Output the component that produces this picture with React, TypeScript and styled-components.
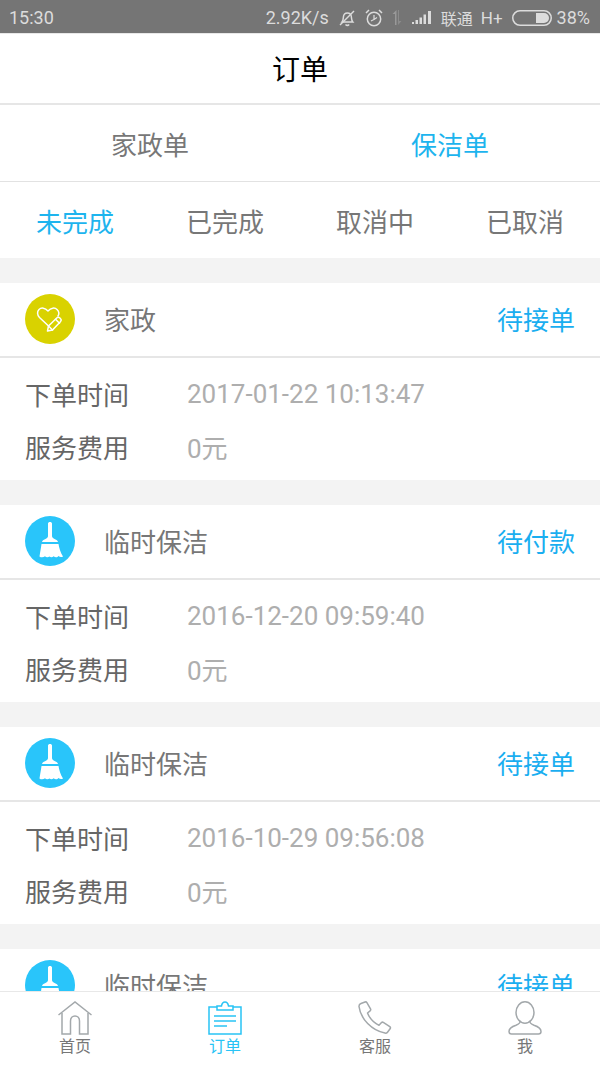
import React from 'react';
import styled, { createGlobalStyle } from 'styled-components';

const GlobalStyle = createGlobalStyle`
  html, body {
    margin: 0;
    padding: 0;
    background: #fff;
  }
  * {
    box-sizing: border-box;
  }
  body {
    font-family: "Roboto", "Noto Sans CJK SC", sans-serif;
  }
`;

const BLUE = '#1db4ee';

const Page = styled.div`
  width: 600px;
  height: 1067px;
  display: flex;
  flex-direction: column;
  overflow: hidden;
  background: #fff;
`;

const StatusBar = styled.div`
  height: 33px;
  flex: none;
  background: #757575;
  color: #dcdcdc;
  display: flex;
  align-items: center;
  justify-content: space-between;
  padding: 2px 10px 0 9px;
  font-size: 18px;
`;

const StatusRight = styled.div`
  display: flex;
  align-items: center;
`;

const StatusText = styled.span<{ $ml?: number; $size?: number }>`
  margin-left: ${(p) => p.$ml ?? 0}px;
  font-size: ${(p) => p.$size ?? 18}px;
  white-space: nowrap;
`;

const StatusIcon = styled.svg<{ $ml: number }>`
  margin-left: ${(p) => p.$ml}px;
  display: block;
  flex: none;
`;

const TitleBar = styled.div`
  height: 72px;
  flex: none;
  border-top: 1px solid #e8e8e8;
  border-bottom: 2px solid #e6e6e6;
  display: flex;
  align-items: center;
  justify-content: center;
  font-size: 28px;
  color: #000;
  padding-bottom: 2px;
`;

const TabRow = styled.div<{ $h: number; $line?: boolean }>`
  height: ${(p) => p.$h}px;
  flex: none;
  display: flex;
  border-bottom: ${(p) => (p.$line ? '1px solid #e2e2e2' : 'none')};
`;

const Tab = styled.div<{ $active?: boolean }>`
  flex: 1;
  display: flex;
  align-items: center;
  justify-content: center;
  font-size: 26px;
  color: ${(p) => (p.$active ? BLUE : '#777')};
`;

const List = styled.div`
  flex: 1;
  min-height: 0;
  overflow: hidden;
  background: #f3f3f3;
  padding-top: 25px;
  display: flex;
  flex-direction: column;
  gap: 25px;
`;

const Card = styled.div`
  flex: none;
  background: #fff;
`;

const CardHead = styled.div`
  height: 75px;
  border-bottom: 2px solid #e6e6e6;
  display: flex;
  align-items: center;
  padding: 0 25px 2px;
`;

const Badge = styled.div<{ $bg: string }>`
  width: 50px;
  height: 50px;
  border-radius: 50%;
  background: ${(p) => p.$bg};
  flex: none;
  display: flex;
  align-items: center;
  justify-content: center;
`;

const CardName = styled.div`
  margin-left: 29px;
  font-size: 26px;
  color: #777;
  flex: 1;
`;

const CardState = styled.div`
  font-size: 26px;
  color: #1aaef0;
`;

const CardBody = styled.div`
  height: 122px;
  padding: 9px 25px 0;
`;

const InfoRow = styled.div`
  height: 53px;
  display: flex;
  align-items: center;
`;

const InfoLabel = styled.div`
  width: 162px;
  font-size: 26px;
  color: #666;
`;

const InfoValue = styled.div`
  font-size: 26px;
  color: #aeaeae;
`;

const BottomNav = styled.div`
  height: 76px;
  flex: none;
  background: #fff;
  border-top: 1px solid #e8e8e8;
  display: flex;
`;

const NavItem = styled.div<{ $active?: boolean }>`
  flex: 1;
  display: flex;
  flex-direction: column;
  align-items: center;
  padding-top: 9px;
  font-size: 16px;
  line-height: 20px;
  color: ${(p) => (p.$active ? '#28c3f5' : '#777')};
  svg {
    display: block;
    margin-bottom: 2px;
  }
`;

const MuteIcon = () => (
  <StatusIcon $ml={9} width="18" height="18" viewBox="0 0 18 18" fill="none" stroke="#dcdcdc" strokeWidth="1.5">
    <path d="M4 13c1.2-1.4 1.2-3 1.4-5 .2-2.300 1.800-4 4-4s3.800 1.700 4 4c.2 2 .2 3.600 1.400 5z" />
    <path d="M7.500 15.500c1 1 2.700 1 3.700 0" />
    <path d="M2 16 16 2" />
  </StatusIcon>
);

const AlarmIcon = () => (
  <StatusIcon $ml={9} width="18" height="20" viewBox="0 0 18 20" fill="none" stroke="#dcdcdc" strokeWidth="1.5">
    <circle cx="9" cy="11" r="6.700" />
    <path d="M9 7v4.500l-3 1.500M9 11.500l3-2" strokeWidth="1.200" />
    <path d="M1 5l3-3M17 5l-3-3" />
  </StatusIcon>
);

const DataIcon = () => (
  <StatusIcon $ml={8} width="13" height="17" viewBox="0 0 13 17" fill="#a8a8a8">
    <path d="M4 16V5H1.500L5.500 1v15z" opacity="0.7" />
    <path d="M8 1v11h2.500L7 16V1z" opacity="0.45" />
  </StatusIcon>
);

const SignalIcon = () => (
  <StatusIcon $ml={8} width="20" height="15" viewBox="0 0 20 15" fill="#dcdcdc">
    <rect x="0" y="12" width="2" height="2" />
    <rect x="3.500" y="10" width="2.500" height="4" />
    <rect x="7.500" y="7.500" width="2.500" height="6.500" />
    <rect x="11.500" y="4.500" width="2.500" height="9.500" />
    <rect x="16" y="1" width="3" height="13" />
  </StatusIcon>
);

const BatteryIcon = () => (
  <StatusIcon $ml={9} width="40" height="16" viewBox="0 0 40 16">
    <rect x="0.750" y="0.750" width="38.500" height="14.500" rx="7.250" fill="none" stroke="#dcdcdc" strokeWidth="1.500" />
    <path d="M24 3h8a5 5 0 0 1 0 10h-8z" fill="#dcdcdc" />
  </StatusIcon>
);

const HeartPenIcon = () => (
  <svg width="28" height="28" viewBox="0 0 28 28" fill="none" stroke="#fff" strokeWidth="1.500" strokeLinejoin="round" strokeLinecap="round">
    <path d="M12 20.500 3.500 12.500C1 10 1 6.500 3 4.500c2.300-2.200 6-1.800 9 1.500 3-3.300 6.800-3.700 9-1.500 2 2 2.300 4.500 1 6.500" />
    <path d="M11.500 26l1-5L21 12.800c.8-.8 1.800-.8 2.600 0l1 1c.8.8.8 1.800 0 2.600L16.500 25z" />
    <path d="M12.500 21l4 4M19.500 14.300l4 4" />
  </svg>
);

const BroomIcon = () => (
  <svg width="26" height="38" viewBox="0 0 26 38" fill="#fff">
    <path d="M11 1.500c0-.8.800-1.500 2-1.500s2 .7 2 1.500V14c0 1.500 1 2.400 3 3.200 1.500.6 2.600 1.400 3 2.800H5c.4-1.400 1.500-2.200 3-2.800 2-.8 3-1.700 3-3.200z" />
    <path d="M4.500 22h17c.6 4 2 8.500 4.500 12.500-1.500 1-3.300.7-4.500-.5-1 1.500-3.500 1.700-4.800.2-1.200 1.300-3 1.500-4.200.3-1.400 1.200-3.500 1.100-4.500-.3-1.500 1.300-4 1.400-5.500.2C3 30.500 4 26 4.500 22z" />
  </svg>
);

const HomeIcon = () => (
  <svg width="34" height="34" viewBox="0 0 34 34" fill="none" stroke="#a3a8ab" strokeWidth="1.500">
    <path d="M0.500 14 17 1l16.500 13" />
    <path d="M4 12v21h8.500V20c0-3 2-5 4.500-5s4.500 2 4.500 5v13H30V12" />
  </svg>
);

const OrderIcon = () => (
  <svg width="34" height="34" viewBox="0 0 34 34" fill="none" stroke="#28c3f5" strokeWidth="1.500">
    <path d="M9 6H1v27h32V6h-8" />
    <path d="M9 9V5h4.500c.4-2.400 1.800-4 3.500-4s3.100 1.600 3.500 4H25v4z" />
    <path d="M6 15h22M6 20h22M6 25h13" />
  </svg>
);

const PhoneIcon = () => (
  <svg width="34" height="34" viewBox="0 0 34 34" fill="none" stroke="#a3a8ab" strokeWidth="1.500" strokeLinejoin="round">
    <path d="M3 2.500 7 1c.8-.3 1.500 0 1.900.7l3.600 6.200c.4.700.2 1.400-.4 1.900L9.500 12c1.800 4.500 6 9.500 11.500 12.300l2.500-2.700c.5-.5 1.200-.6 1.800-.2l6.500 4.300c.7.500.8 1.300.3 2l-2.600 3.500c-.6.800-1.500 1.100-2.600.9C14 29.500 2.500 18 1 5.500.9 4 1.700 3 3 2.500z" />
  </svg>
);

const UserIcon = () => (
  <svg width="34" height="34" viewBox="0 0 34 34" fill="none" stroke="#a3a8ab" strokeWidth="1.500">
    <ellipse cx="17" cy="11.500" rx="9" ry="10.700" />
    <path d="M12 20c.5 2-.8 3-4 4.200C4 25.500 1 27 1 30.500c0 1.500 1 2.500 2.500 2.500h27c1.500 0 2.500-1 2.500-2.500 0-3.500-3-5-7-6.300-3.200-1.200-4.500-2.200-4-4.200" />
  </svg>
);

const orders = [
  { name: '家政', state: '待接单', time: '2017-01-22 10:13:47', kind: 'home' },
  { name: '临时保洁', state: '待付款', time: '2016-12-20 09:59:40', kind: 'clean' },
  { name: '临时保洁', state: '待接单', time: '2016-10-29 09:56:08', kind: 'clean' },
  { name: '临时保洁', state: '待接单', time: '2016-10-20 09:56:08', kind: 'clean' },
];

const App: React.FC = () => {
  return (
    <Page>
      <GlobalStyle />
      <StatusBar>
        <span>15:30</span>
        <StatusRight>
          <StatusText>2.92K/s</StatusText>
          <MuteIcon />
          <AlarmIcon />
          <DataIcon />
          <SignalIcon />
          <StatusText $ml={9} $size={16}>联通</StatusText>
          <StatusText $ml={8} $size={17}>H+</StatusText>
          <BatteryIcon />
          <StatusText $ml={5}>38%</StatusText>
        </StatusRight>
      </StatusBar>
      <TitleBar>订单</TitleBar>
      <TabRow $h={77} $line>
        <Tab>家政单</Tab>
        <Tab $active>保洁单</Tab>
      </TabRow>
      <TabRow $h={76}>
        <Tab $active>未完成</Tab>
        <Tab>已完成</Tab>
        <Tab>取消中</Tab>
        <Tab>已取消</Tab>
      </TabRow>
      <List>
        {orders.map((item) => (
          <Card key={item.time}>
            <CardHead>
              <Badge $bg={item.kind === 'home' ? '#d9d200' : '#29c5fa'}>
                {item.kind === 'home' ? <HeartPenIcon /> : <BroomIcon />}
              </Badge>
              <CardName>{item.name}</CardName>
              <CardState>{item.state}</CardState>
            </CardHead>
            <CardBody>
              <InfoRow>
                <InfoLabel>下单时间</InfoLabel>
                <InfoValue>{item.time}</InfoValue>
              </InfoRow>
              <InfoRow>
                <InfoLabel>服务费用</InfoLabel>
                <InfoValue>0元</InfoValue>
              </InfoRow>
            </CardBody>
          </Card>
        ))}
      </List>
      <BottomNav>
        <NavItem><HomeIcon />首页</NavItem>
        <NavItem $active><OrderIcon />订单</NavItem>
        <NavItem><PhoneIcon />客服</NavItem>
        <NavItem><UserIcon />我</NavItem>
      </BottomNav>
    </Page>
  );
};

export default App;
